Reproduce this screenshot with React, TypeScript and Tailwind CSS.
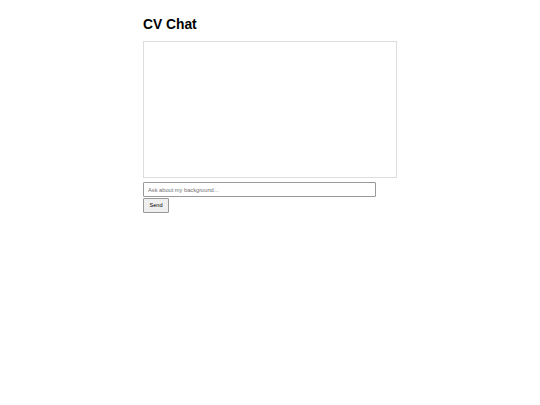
export default function App() {
  return (
    <div className="min-h-[405px] bg-white" style={{ fontFamily: '"Liberation Sans", Arial, sans-serif' }}>
      <div className="mx-auto w-[254px] pt-[16px]">
        <h1 className="text-[13.8px] font-bold leading-[17px] text-black">CV Chat</h1>
        <div className="mt-[8px] h-[137px] border border-[#dddddd] bg-white" />
        <div className="mt-[4px] flex flex-col items-start">
          <input
            className="h-[15px] w-[233px] border border-[#999999] rounded-[1px] px-[4px] text-[5.7px] text-black placeholder:text-[#6f6f6f] outline-none"
            placeholder="Ask about my background..."
          />
          <button className="mt-[1px] h-[15px] w-[26px] border border-[#999999] rounded-[1px] bg-[#efefef] text-[5.6px] text-black">
            Send
          </button>
        </div>
      </div>
    </div>
  );
}
